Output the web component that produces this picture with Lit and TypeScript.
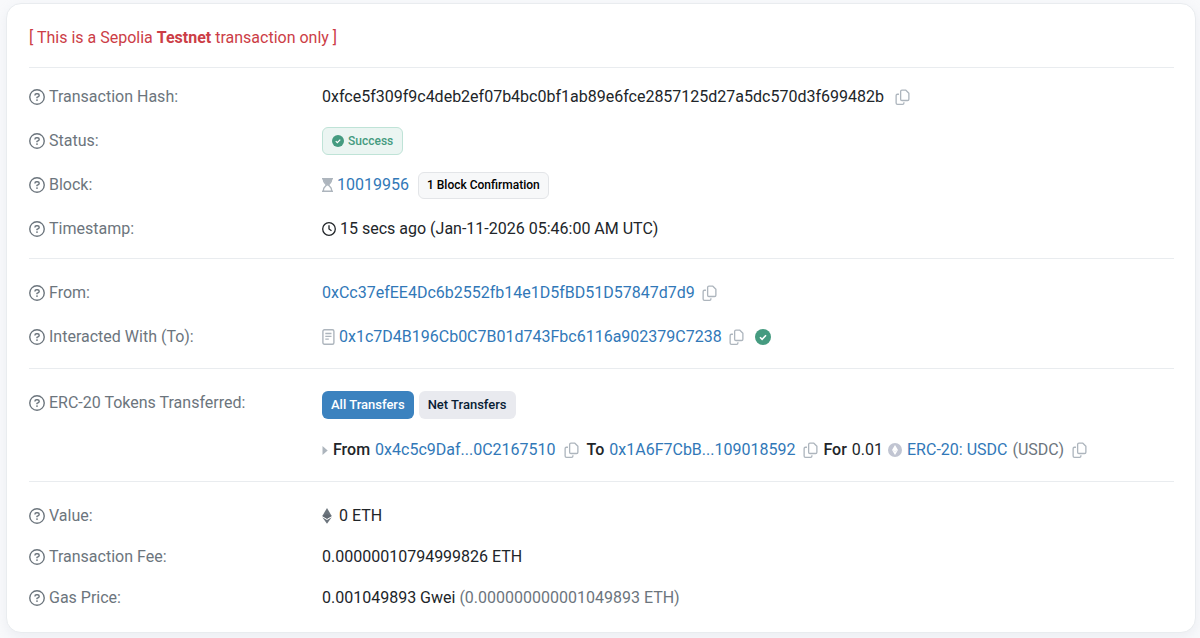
import { LitElement, html, css, type TemplateResult } from "lit";
import { customElement, property } from "lit/decorators.js";

const helpIcon = html`<svg width="16" height="16" viewBox="0 0 16 16" fill="none" aria-hidden="true">
  <circle cx="8" cy="8" r="7.25" stroke="currentColor" stroke-width="1.4" />
  <path d="M5.900 6.400c0-1 .7-1.700 1.700-1.700h.8c1 0 1.800.7 1.800 1.600 0 .7-.4 1.100-.9 1.400L8 8.400v.8" stroke="currentColor" stroke-width="1.400" />
  <circle cx="8" cy="11.100" r=".9" fill="currentColor" />
</svg>`;

const copyShape = html`<svg width="15" height="17" viewBox="0 0 16 18" fill="none" aria-hidden="true">
  <path d="M7.400 1.200h4.200l3.200 3.200v6.400c0 .8-.6 1.400-1.400 1.400H7.400C6.600 12.200 6 11.600 6 10.800V2.600c0-.8.6-1.400 1.400-1.400z" stroke="currentColor" stroke-width="1.400" stroke-linejoin="round" />
  <path d="M4.200 5.500H2.600c-.8 0-1.400.6-1.400 1.400v8c0 .8.6 1.400 1.400 1.400h5.500c.8 0 1.400-.6 1.400-1.400v-.9" stroke="currentColor" stroke-width="1.400" />
</svg>`;

const checkCircle = (size: number) => html`<svg width=${size} height=${size} viewBox="0 0 16 16" fill="none" aria-hidden="true">
  <circle cx="8" cy="8" r="8" fill="#459b80" />
  <path d="M5 8.200l2.100 2.100L11 6.200" stroke="#fff" stroke-width="1.600" />
</svg>`;

const hourglass = html`<svg width="11" height="14" viewBox="0 0 11 14" fill="none" aria-hidden="true">
  <path d="M0 .7h11M0 13.300h11" stroke="#adb5bd" stroke-width="1.400" />
  <path d="M1.500 1v1.600c0 2 2.600 3 2.600 4.400S1.500 9.400 1.500 11.400V13M9.500 1v1.600c0 2-2.600 3-2.600 4.400s2.600 2.400 2.600 4.400V13" stroke="#adb5bd" stroke-width="1.300" />
  <path d="M1.700 1h7.600v2L6.900 6v2.200L5.500 7.600 4.100 8.200V6L1.700 3z" fill="#adb5bd" />
</svg>`;

const clock = html`<svg width="14" height="14" viewBox="0 0 14 14" fill="none" aria-hidden="true">
  <circle cx="7" cy="7" r="6.300" stroke="currentColor" stroke-width="1.300" />
  <path d="M7 3.300V7l2.500 1.700" stroke="currentColor" stroke-width="1.300" />
</svg>`;

const contractDoc = html`<svg width="13" height="16" viewBox="0 0 13 16" fill="none" aria-hidden="true">
  <rect x=".9" y=".7" width="11" height="14.500" rx="1.500" stroke="#adb5bd" stroke-width="1.400" />
  <path d="M3.300 4.500h6.200M3.300 7.300h6.200M3.300 10.100h3.500" stroke="#adb5bd" stroke-width="1.300" />
</svg>`;

const caret = html`<svg width="6" height="9" viewBox="0 0 6 9" aria-hidden="true"><path d="M.5 0l5.200 4.500L.5 9z" fill="#adb5bd" /></svg>`;

const tokenIcon = html`<svg width="14" height="14" viewBox="0 0 14 14" aria-hidden="true">
  <circle cx="7" cy="7" r="7" fill="#c1c5d2" />
  <path d="M7 2l3 5-3 5-3-5z" fill="#fff" />
  <path d="M4 7l3 1.600L10 7" fill="none" stroke="#dfe2ea" stroke-width=".6" />
</svg>`;

const etherIcon = html`<svg width="10" height="16" viewBox="0 0 10 16" aria-hidden="true">
  <path d="M5 0l4.700 8L5 10.800.3 8z" fill="#6c757d" />
  <path d="M5 5.900L9.700 8 5 10.800.3 8z" fill="#626a73" />
  <path d="M.3 9.300L5 12.100l4.700-2.800L5 15.800z" fill="#6c757d" />
</svg>`;

@customElement("copy-button")
export class CopyButton extends LitElement {
  @property() value = "";

  static styles = css`
    :host {
      display: inline-flex;
    }
    .copy {
      display: inline-flex;
      padding: 0;
      border: 0;
      background: none;
      color: #adb5bd;
      cursor: pointer;
    }
  `;

  private copy() {
    navigator.clipboard?.writeText(this.value);
  }

  render() {
    return html`<button class="copy" type="button" aria-label="Copy" @click=${this.copy}>${copyShape}</button>`;
  }
}

@customElement("app-root")
export class AppRoot extends LitElement {
  static styles = css`
    :host {
      display: block;
      box-sizing: border-box;
      padding: 3px 4px 5px 6px;
      background: #f8f9fb;
      color: #212529;
      font: 400 16px/24px Roboto, "Liberation Sans", sans-serif;
    }
    .card {
      padding: 0 21px 0 22px;
      border: 1px solid #e9ecef;
      border-radius: 15px;
      background: #fff;
      box-shadow: 0 4px 12px rgba(189, 197, 209, 0.2);
    }
    .notice {
      margin: 0;
      padding: 22px 0 17px;
      color: #cc3d46;
    }
    .group {
      display: grid;
      gap: 16px;
      margin: 0;
      padding: 20px 0 17px;
      border-top: 1px solid #e9ecef;
    }
    .overview {
      padding: 15px 0;
    }
    .tokens {
      padding: 22px 0 19px;
    }
    .costs {
      gap: 17px;
      padding: 22px 0;
    }
    .row {
      display: grid;
      grid-template-columns: 1fr 3fr;
      column-gap: 9px;
      align-items: start;
    }
    .overview .row,
    .parties .row {
      align-items: center;
      min-height: 28px;
    }
    .label,
    .value,
    .line {
      display: flex;
      align-items: center;
      gap: 4px;
    }
    .stack .line {
      gap: 5px;
    }
    .label {
      color: #6c757d;
    }
    .value {
      margin: 0;
    }
    .stack {
      display: grid;
      gap: 19px;
      margin: 0;
    }
    .link {
      color: #3178b8;
      text-decoration: none;
    }
    .space {
      margin-left: 7px;
    }
    .after {
      margin-left: 3px;
    }
    .muted {
      color: #6c757d;
    }
    .strong {
      font-weight: 500;
    }
    .badge {
      display: inline-flex;
      align-items: center;
      box-sizing: border-box;
      height: 28px;
      gap: 4px;
      padding: 0 9px;
      border: 1px solid #e3e5e8;
      border-radius: 6px;
      background: #f7f8f9;
      color: #000;
      font-size: 12px;
      font-weight: 500;
      line-height: 18px;
    }
    .success {
      border-color: #bfe3d7;
      background: #ebf5f2;
      color: #459b80;
    }
    .confirm {
      height: 27px;
      margin-left: 5px;
      padding: 0 8px;
    }
    .tab {
      height: 28px;
      padding: 0 9px;
      border: 0;
      border-radius: 6px;
      background: #e9eaef;
      color: #081d35;
      font: 500 13px/20px Roboto, "Liberation Sans", sans-serif;
      cursor: pointer;
    }
    .active {
      background: #3b82bf;
      color: #fff;
    }
  `;

  private row(label: string, value: TemplateResult, stacked = false) {
    return html`<div class="row">
      <dt class="label">${helpIcon}<span>${label}</span></dt>
      <dd class=${stacked ? "stack" : "value"}>${value}</dd>
    </div>`;
  }

  render() {
    const hash = "0xfce5f309f9c4deb2ef07b4bc0bf1ab89e6fce2857125d27a5dc570d3f699482b";
    const from = "0xCc37efEE4Dc6b2552fb14e1D5fBD51D57847d7d9";
    const to = "0x1c7D4B196Cb0C7B01d743Fbc6116a902379C7238";
    return html`<main class="card">
      <p class="notice">[ This is a Sepolia <b>Testnet</b> transaction only ]</p>
      <dl class="group overview">
        ${this.row("Transaction Hash:", html`<span>${hash}</span><copy-button class="space" .value=${hash}></copy-button>`)}
        ${this.row("Status:", html`<span class="badge success">${checkCircle(12)}Success</span>`)}
        ${this.row("Block:", html`${hourglass}<a class="link" href="#block">10019956</a><span class="badge confirm">1 Block Confirmation</span>`)}
        ${this.row("Timestamp:", html`${clock}<span>15 secs ago (Jan-11-2026 05:46:00 AM UTC)</span>`)}
      </dl>
      <dl class="group parties">
        ${this.row("From:", html`<a class="link" href="#from">${from}</a><copy-button class="after" .value=${from}></copy-button>`)}
        ${this.row("Interacted With (To):", html`${contractDoc}<a class="link" href="#to">${to}</a><copy-button class="after" .value=${to}></copy-button><span class="line space">${checkCircle(16)}</span>`)}
      </dl>
      <dl class="group tokens">
        ${this.row("ERC-20 Tokens Transferred:", html`
          <div class="line">
            <button class="tab active" type="button">All Transfers</button>
            <button class="tab" type="button">Net Transfers</button>
          </div>
          <div class="line">
            ${caret}<span class="strong">From</span>
            <a class="link" href="#sender">0x4c5c9Daf...0C2167510</a><copy-button class="after" value="0x4c5c9Daf...0C2167510"></copy-button>
            <span class="strong after">To</span>
            <a class="link" href="#recipient">0x1A6F7CbB...109018592</a><copy-button class="after" value="0x1A6F7CbB...109018592"></copy-button>
            <span class="strong">For</span><span>0.01</span>
            ${tokenIcon}
            <a class="link" href="#token">ERC-20: USDC</a><span class="muted">(USDC)</span><copy-button class="after" value="USDC"></copy-button>
          </div>`, true)}
      </dl>
      <dl class="group costs">
        ${this.row("Value:", html`${etherIcon}<span class="after">0 ETH</span>`)}
        ${this.row("Transaction Fee:", html`<span>0.00000010794999826 ETH</span>`)}
        ${this.row("Gas Price:", html`<span>0.001049893 Gwei <span class="muted">(0.000000000001049893 ETH)</span></span>`)}
      </dl>
    </main>`;
  }
}
